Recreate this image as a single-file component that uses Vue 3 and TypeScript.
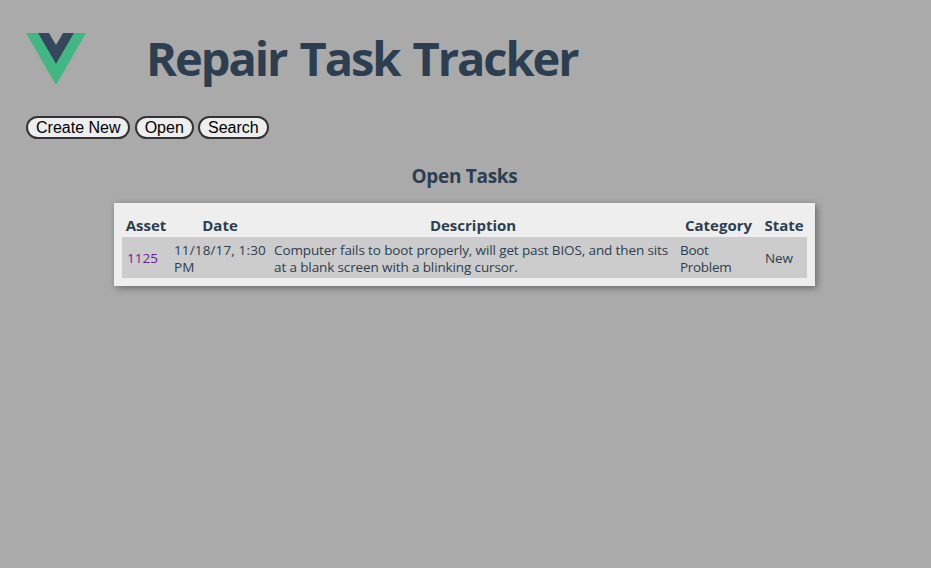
<script setup lang="ts">
interface Task {
  asset: string
  date: string
  description: string
  category: string
  state: string
}

const actions: string[] = ['Create New', 'Open', 'Search']

const tasks: Task[] = [
  {
    asset: '1125',
    date: '11/18/17, 1:30 PM',
    description:
      'Computer fails to boot properly, will get past BIOS, and then sits at a blank screen with a blinking cursor.',
    category: 'Boot Problem',
    state: 'New',
  },
]
</script>

<template>
  <div class="app">
    <header class="header">
      <svg class="logo" viewBox="0 0 60 52" aria-hidden="true">
        <path d="M0 0H12L30 31L48 0H60L30 52Z" fill="#41b883" />
        <path d="M12 0H23L30 12L37 0H48L30 31Z" fill="#35495e" />
      </svg>
      <h1>Repair Task Tracker</h1>
    </header>
    <nav class="actions">
      <button v-for="action in actions" :key="action" type="button">{{ action }}</button>
    </nav>
    <main>
      <h2>Open Tasks</h2>
      <section class="card">
        <table>
          <colgroup>
            <col class="c-asset" />
            <col class="c-date" />
            <col class="c-description" />
            <col class="c-category" />
            <col class="c-state" />
          </colgroup>
          <thead>
            <tr>
              <th>Asset</th>
              <th>Date</th>
              <th>Description</th>
              <th>Category</th>
              <th>State</th>
            </tr>
          </thead>
          <tbody>
            <tr v-for="task in tasks" :key="task.asset">
              <td class="asset"><a href="#">{{ task.asset }}</a></td>
              <td class="date">{{ task.date }}</td>
              <td class="description">{{ task.description }}</td>
              <td class="category">{{ task.category }}</td>
              <td class="state">{{ task.state }}</td>
            </tr>
          </tbody>
        </table>
      </section>
    </main>
  </div>
</template>

<style>
body {
  margin: 0;
  background: #aaa;
}
</style>

<style scoped>
.app {
  box-sizing: border-box;
  min-height: 568px;
  padding: 24px 26px 0;
  background: #aaa;
  color: #2c3e50;
  font-family: 'Open Sans', 'Noto Sans', sans-serif;
}
.header {
  display: flex;
  align-items: center;
  gap: 60px;
  height: 70px;
}
.logo {
  width: 60px;
  height: 52px;
}
h1 {
  margin: 0 0 2px;
  font-size: 47px;
  line-height: 64px;
  font-weight: 700;
  letter-spacing: -2.05px;
  word-spacing: 3px;
  white-space: nowrap;
}
.actions {
  display: flex;
  gap: 4.2px;
  margin-top: 22px;
}
button {
  box-sizing: border-box;
  height: 23px;
  padding: 0 8px;
  border: 2px solid #333;
  border-radius: 12px;
  background: #eee;
  color: #000;
  font: 16px/19px 'Liberation Sans', Arial, sans-serif;
}
h2 {
  margin: 24px 0 14px;
  padding-right: 2px;
  font-size: 19px;
  line-height: 26px;
  font-weight: 700;
  letter-spacing: -0.3px;
  text-align: center;
}
.card {
  box-sizing: border-box;
  width: 701px;
  height: 83px;
  margin: 0 88px;
  padding: 8px;
  background: #eee;
  box-shadow: 2px 2px 7px rgba(0, 0, 0, 0.38);
}
table {
  width: 685px;
  table-layout: fixed;
  border-collapse: collapse;
}
.c-asset { width: 48px; }
.c-date { width: 100px; }
.c-description { width: 406px; }
.c-category { width: 85px; }
.c-state { width: 46px; }
th {
  height: 26px;
  padding: 3px 0 1px;
  box-sizing: border-box;
  font-size: 15px;
  line-height: 22px;
  text-align: center;
  white-space: nowrap;
}
td {
  box-sizing: border-box;
  height: 41px;
  padding: 5px 0 2px 4px;
  background: #ccc;
  font-size: 13.5px;
  line-height: 17px;
  letter-spacing: -0.12px;
  vertical-align: middle;
}
.asset {
  padding: 4px 0 3px 5px;
  letter-spacing: 0;
}
.date {
  letter-spacing: 0.14px;
}
.category {
  letter-spacing: -0.3px;
}
.state {
  padding: 4px 0 3px 4px;
}
a {
  color: #6a1b9a;
  text-decoration: none;
}
</style>
